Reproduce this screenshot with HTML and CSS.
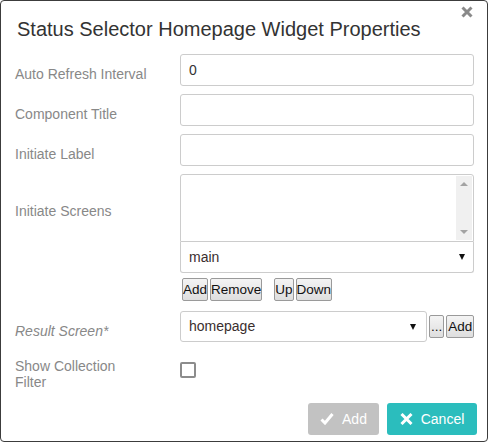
FILE: index.html
```html
<!DOCTYPE html>
<html>
<head>
<meta charset="utf-8">
<link rel="stylesheet" href="styles.css">
</head>
<body>
<div class="dialog">
  <div class="header">
    <h1 class="title">Status Selector Homepage Widget Properties</h1>
    <span class="close"><svg width="12" height="12" viewBox="0 0 12 12"><path d="M1.5 1.5 L10.5 10.5 M10.5 1.5 L1.5 10.5" stroke="#8a8a8a" stroke-width="3" stroke-linecap="butt"/></svg></span>
  </div>
  <div class="form">
    <div class="row">
      <div class="label">Auto Refresh Interval</div>
      <div class="control"><div class="field">0</div></div>
    </div>
    <div class="row">
      <div class="label">Component Title</div>
      <div class="control"><div class="field"></div></div>
    </div>
    <div class="row">
      <div class="label">Initiate Label</div>
      <div class="control"><div class="field"></div></div>
    </div>
    <div class="row row-screens">
      <div class="label label-screens">Initiate Screens</div>
      <div class="control">
        <div class="listbox">
          <div class="scrollbar">
            <span class="arrow-up"></span>
            <span class="arrow-down"></span>
          </div>
        </div>
        <div class="select select-main"><span>main</span><span class="caret"></span></div>
        <div class="btn-row">
          <button class="mini">Add</button><button class="mini">Remove</button>
          <button class="mini up">Up</button><button class="mini">Down</button>
        </div>
      </div>
    </div>
    <div class="row row-result">
      <div class="label label-italic">Result Screen*</div>
      <div class="control control-inline">
        <div class="select select-result"><span>homepage</span><span class="caret"></span></div>
        <button class="mini mini-tall">...</button><button class="mini mini-tall">Add</button>
      </div>
    </div>
    <div class="row row-check">
      <div class="label label-two">Show Collection<br>Filter</div>
      <div class="control"><span class="checkbox"></span></div>
    </div>
  </div>
  <div class="footer">
    <button class="action action-add"><svg width="14" height="12" viewBox="0 0 14 12"><path d="M1.5 6.5 L5 10 L12.5 1" fill="none" stroke="#fff" stroke-width="3"/></svg>Add</button>
    <button class="action action-cancel"><svg width="13" height="12" viewBox="0 0 13 12"><path d="M1.5 1 L11.5 11 M11.5 1 L1.5 11" stroke="#fff" stroke-width="3"/></svg>Cancel</button>
  </div>
</div>
</body>
</html>
```
FILE: styles.css
```css
html, body {
  margin: 0;
  padding: 0;
  background: #fff;
}
body {
  font-family: "Liberation Sans", Arial, sans-serif;
  font-size: 14px;
  color: #333;
}
.dialog {
  width: 488px;
  height: 442px;
  box-sizing: border-box;
  border: 1px solid #3c3c3c;
  border-radius: 4px;
  position: relative;
  background: #fff;
  overflow: hidden;
}
.header {
  height: 53px;
  box-sizing: border-box;
  padding: 16px 0 0 16px;
}
.title {
  margin: 0;
  font-size: 20px;
  line-height: 24px;
  font-weight: normal;
  color: #333;
}
.close {
  position: absolute;
  top: 5px;
  right: 14px;
  width: 12px;
  height: 12px;
  display: block;
}
.close svg { display: block; }
.form {
  padding: 0 13px 0 14px;
}
.row {
  display: flex;
  align-items: flex-start;
  margin-bottom: 8px;
}
.row-screens { margin-bottom: 10px; }
.label {
  width: 165px;
  flex: none;
  color: #888;
  font-size: 14px;
  line-height: 20px;
  padding-top: 10px;
}
.label-screens { padding-top: 27px; }
.label-italic { font-style: italic; padding-top: 10px; }
.label-two { line-height: 16px; padding-top: 8px; }
.control {
  width: 294px;
  flex: none;
}
.field {
  height: 32px;
  box-sizing: border-box;
  border: 1px solid #ccc;
  border-radius: 3px;
  padding: 0 8px;
  line-height: 30px;
  color: #333;
}
.listbox {
  height: 68px;
  box-sizing: border-box;
  border: 1px solid #ccc;
  border-radius: 3px 3px 0 0;
  display: flex;
  justify-content: flex-end;
  padding: 1px;
}
.scrollbar {
  width: 16px;
  background: #f0f0f0;
  position: relative;
}
.arrow-up, .arrow-down {
  position: absolute;
  left: 4px;
  width: 0;
  height: 0;
  border-left: 4px solid transparent;
  border-right: 4px solid transparent;
}
.arrow-up {
  top: 6px;
  border-bottom: 4px solid #a3a3a3;
}
.arrow-down {
  bottom: 6px;
  border-top: 4px solid #a3a3a3;
}
.select {
  height: 31px;
  box-sizing: border-box;
  border: 1px solid #ccc;
  border-radius: 3px;
  padding: 0 8px 0 8px;
  line-height: 29px;
  display: flex;
  justify-content: space-between;
  align-items: center;
  color: #3a2e2e;
}
.select-main {
  border-radius: 0 0 3px 3px;
  border-top: none;
  height: 31px;
}
.caret {
  width: 0;
  height: 0;
  border-left: 3.5px solid transparent;
  border-right: 3.5px solid transparent;
  border-top: 6px solid #111;
}
.btn-row {
  margin-top: 5px;
  padding-left: 2px;
  display: flex;
  height: 23px;
}
.mini {
  font-family: "Liberation Sans", Arial, sans-serif;
  font-size: 13.5px;
  height: 23px;
  box-sizing: border-box;
  padding: 0;
  margin: 0 2px 0 0;
  border: 1px solid #9a9a9a;
  border-radius: 2px;
  background: linear-gradient(#f4f4f4, #dedede);
  color: #111;
  line-height: 20px;
}
.mini.up { margin-left: 10px; }
.control-inline {
  width: 294px;
  display: flex;
  align-items: flex-start;
}
.select-result {
  width: 247px;
  flex: none;
  padding-right: 10px;
}
.mini-tall {
  height: 23px;
  margin-top: 4px;
  margin-left: 2px;
  margin-right: 0;
  padding: 0 1px;
}
.checkbox {
  display: block;
  width: 16px;
  height: 16px;
  box-sizing: border-box;
  border: 2px solid #8c8c8c;
  border-radius: 2px;
  margin-top: 12px;
}
.footer {
  position: absolute;
  right: 10px;
  bottom: 6px;
  display: flex;
  gap: 8px;
}
.action {
  font-family: "Liberation Sans", Arial, sans-serif;
  font-size: 14px;
  height: 32px;
  border: none;
  border-radius: 3px;
  color: #fff;
  display: flex;
  align-items: center;
  justify-content: center;
  gap: 8px;
  padding: 0;
}
.action-add {
  width: 71px;
  background: #c2c2c2;
}
.action-cancel {
  width: 90px;
  background: #2bbdbd;
}
```
